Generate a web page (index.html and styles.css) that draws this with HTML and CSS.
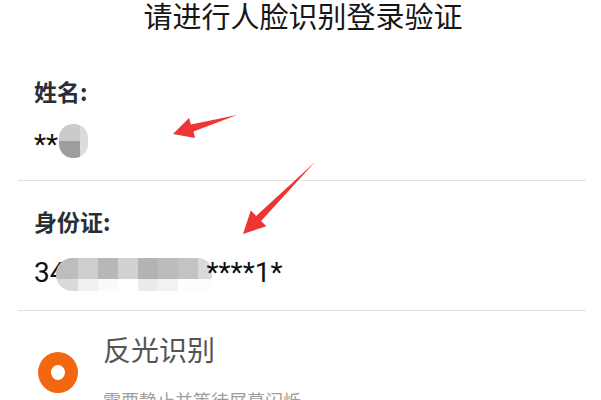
FILE: index.html
```html
<!DOCTYPE html>
<html lang="zh-CN">
<head>
<meta charset="utf-8">
<title>人脸识别登录验证</title>
<link rel="stylesheet" href="styles.css">
</head>
<body>
<div class="page">
  <h1 class="title">请进行人脸识别登录验证</h1>

  <section class="field field-name">
    <div class="label">姓名:</div>
    <div class="value">**<span class="mask-name"></span></div>
  </section>
  <div class="divider divider-1"></div>

  <section class="field field-id">
    <div class="label">身份证:</div>
    <div class="value">34<span class="mask-id"><span class="mask-row mask-top"></span><span class="mask-row mask-bottom"></span></span>****1*</div>
  </section>
  <div class="divider divider-2"></div>

  <section class="option">
    <div class="radio"></div>
    <div class="option-text">
      <div class="option-title">反光识别</div>
      <div class="option-desc">需要静止并等待屏幕闪烁</div>
    </div>
  </section>

  <svg class="arrows" width="601" height="400" viewBox="0 0 601 400">
    <polygon points="173,134 189,118 191,124.6 237,115 193.5,131.4 195,138" fill="#ee3535"/>
    <polygon points="243,234 250.8,210.6 256.1,215.9 315,162 261.1,220.9 266.4,226.2" fill="#ee3535"/>
  </svg>
</div>
</body>
</html>
```

FILE: styles.css
```css
html, body {
  margin: 0;
  padding: 0;
  background: #ffffff;
}

body {
  font-family: "Noto Sans CJK SC", "Noto Sans", sans-serif;
  width: 601px;
  height: 400px;
  overflow: hidden;
}

.page {
  position: relative;
  padding: 0 15px 0 18px;
  height: 400px;
}

.title {
  margin: 0;
  font-size: 29px;
  line-height: 30px;
  font-weight: 400;
  color: #161616;
  text-align: center;
  padding-left: 2px;
}

.field {
  padding-left: 16px;
}

.field-name {
  margin-top: 50px;
}

.field-id {
  margin-top: 29px;
}

.label {
  font-size: 23px;
  line-height: 22px;
  font-weight: 700;
  color: #2b2e36;
}

.value {
  font-family: Roboto, "Liberation Sans", sans-serif;
  font-size: 28px;
  line-height: 28px;
  height: 28px;
  color: #111111;
  white-space: nowrap;
}

.field-name .value {
  margin-top: 29px;
}

.field-id .value {
  margin-top: 27px;
}

.mask-name {
  display: inline-block;
  width: 29px;
  height: 34px;
  margin-left: 1px;
  margin-top: -7px;
  vertical-align: -4px;
  border-radius: 14px;
  background-image:
    linear-gradient(to right, rgba(0, 0, 0, 0) 21px, #dcdcdc 21px),
    linear-gradient(to bottom, #cbcbcb 50%, #9e9e9e 50%);
}

.mask-id {
  display: inline-block;
  width: 156px;
  height: 33px;
  margin: -1px -6px -5px -9px;
  vertical-align: -4px;
  border-radius: 16px 14px 4px 16px;
  overflow: hidden;
}

.mask-row {
  display: block;
}

.mask-top {
  height: 21px;
  background: linear-gradient(to right,
    #bdbdbd 0 22px, #cecece 22px 42px, #b7b7b7 42px 62px, #d1d1d1 62px 82px,
    #b3b3b3 82px 102px, #bcbcbc 102px 122px, #c3c3c3 122px 142px, #dadada 142px);
}

.mask-bottom {
  height: 12px;
  background: linear-gradient(to right,
    #dadada 0 22px, #f1f1f1 22px 42px, #fafafa 42px 62px, #ffffff 62px 82px,
    #ebebeb 82px 102px, #f2f2f2 102px 122px, #fdfdfd 122px);
}

.divider {
  height: 1px;
  background: #e2e2e2;
}

.divider-1 {
  margin-top: 21px;
}

.divider-2 {
  margin-top: 23px;
}

.option {
  display: flex;
  align-items: flex-start;
  padding-top: 24px;
  padding-left: 20px;
}

.radio {
  width: 40px;
  height: 41px;
  margin-top: 17px;
  box-sizing: border-box;
  border-radius: 50%;
  border: 13px solid #f2670f;
  flex: none;
}

.option-text {
  margin-left: 25px;
}

.option-title {
  font-size: 28px;
  line-height: 28px;
  color: #555555;
}

.option-desc {
  margin-top: 27px;
  font-size: 18px;
  line-height: 20px;
  color: #9e9e9e;
  white-space: nowrap;
}

.arrows {
  position: absolute;
  left: 0;
  top: 0;
  pointer-events: none;
}
```
